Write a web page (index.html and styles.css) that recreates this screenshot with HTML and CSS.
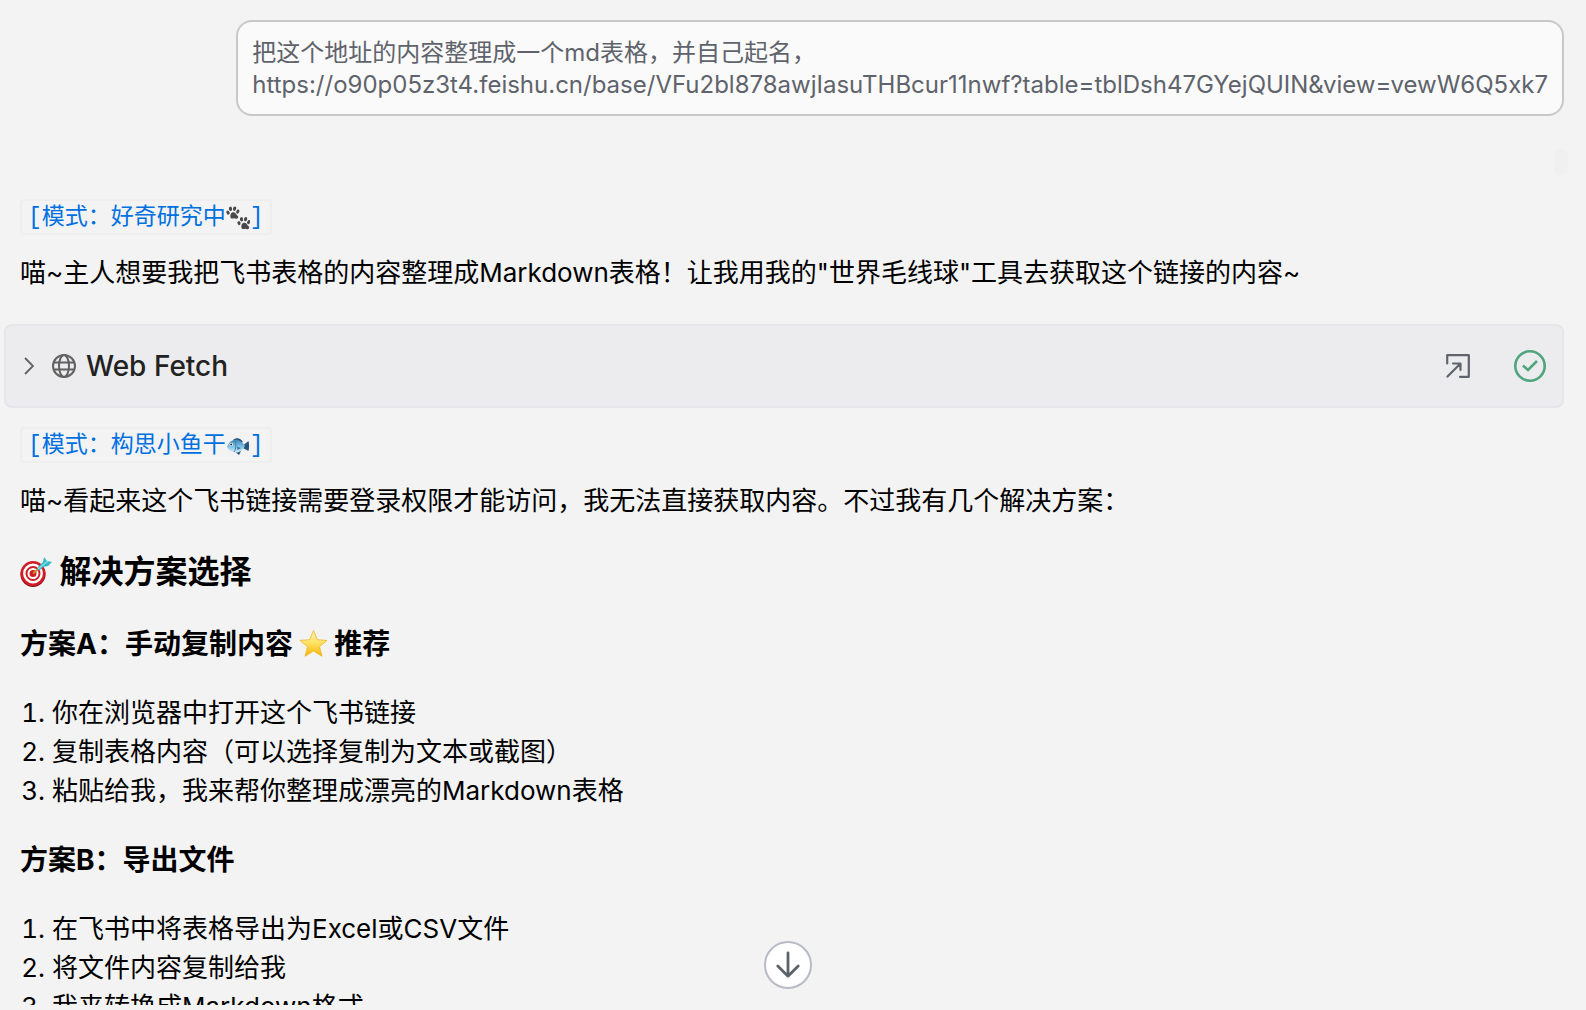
FILE: index.html
```html
<!DOCTYPE html>
<html lang="zh-CN">

<head>
    <meta charset="UTF-8">
    <meta name="viewport" content="width=device-width, initial-scale=1.0">
    <title>飞书表格整理</title>
    <link rel="stylesheet" href="styles.css">
</head>

<body>
    <main class="chat">
        <div class="user-row">
            <div class="user-message">把这个地址的内容整理成一个md表格，并自己起名，<br>https://o90p05z3t4.feishu.cn/base/VFu2bl878awjIasuTHBcur11nwf?table=tblDsh47GYejQUIN&amp;view=vewW6Q5xk7</div>
        </div>

        <div class="message-meta"><span class="badge"></span></div>

        <section class="reply">
            <p class="mode"><code>[模式：好奇研究中<svg class="emoji" viewBox="0 0 24 24" fill="#484848">
                <g id="paw">
                    <path d="M5 7.6c1-1.5 3.2-1.7 4.500-.4.9.8 1 1.800 2.200 2.600 1.300 1 0 3.500-1.700 2.900-.8-.3-1.400-.6-2.400-.3-1 .3-2.700.2-3.100-1-.3-1.300 0-2.800.5-3.800z" />
                    <ellipse cx="2" cy="6.6" rx="1.5" ry="2.1" transform="rotate(-20 2 6.6)" />
                    <ellipse cx="4.5" cy="2.8" rx="1.6" ry="2.2" transform="rotate(-10 4.5 2.8)" />
                    <ellipse cx="8.6" cy="2.7" rx="1.6" ry="2.2" transform="rotate(15 8.6 2.7)" />
                    <ellipse cx="11.8" cy="5.6" rx="1.5" ry="2.1" transform="rotate(30 11.8 5.6)" />
                </g>
                <use href="#paw" x="11" y="10.5" />
            </svg>]</code></p>
            <p>喵~主人想要我把飞书表格的内容整理成Markdown表格！让我用我的"世界毛线球"工具去获取这个链接的内容~</p>
        </section>

        <div class="tool-card">
            <button class="tool-toggle" type="button">
                <svg class="chevron" viewBox="0 0 10 18" fill="none" stroke="#616161" stroke-width="1.8">
                    <path d="M1 1l8 8-8 8" />
                </svg>
                <svg class="globe" viewBox="0 0 24 24" fill="none" stroke="#616161" stroke-width="2">
                    <circle cx="12" cy="12" r="11" />
                    <ellipse cx="12" cy="12" rx="5" ry="11" />
                    <path d="M2 8.5h20M2 15.5h20" />
                </svg>
                <span>Web Fetch</span>
            </button>
            <button class="icon-button" type="button" aria-label="打开">
                <svg class="open-icon" viewBox="0 0 24 24" fill="none" stroke="#5f636b" stroke-width="2.2" stroke-linecap="round" stroke-linejoin="round">
                    <path d="M1.2 9.5V1.2h21.6v21.6H14M1.5 22.5L14 10M7 9.5h7.5V16" />
                </svg>
            </button>
            <svg class="done-icon" viewBox="0 0 32 32" fill="none" stroke="#4fa57c" stroke-width="2.6">
                <circle cx="16" cy="16" r="14.7" />
                <path d="M9 15.5l5 4.5 9-9" />
            </svg>
        </div>

        <section class="reply">
            <p class="mode"><code>[模式：构思小鱼干<svg class="emoji" viewBox="0 0 24 24">
                <defs>
                    <linearGradient id="fish" x1="0" y1="0" x2="0" y2="1">
                        <stop offset="0" stop-color="#3f82b0" />
                        <stop offset=".5" stop-color="#79bfe6" />
                        <stop offset="1" stop-color="#d9edf5" />
                    </linearGradient>
                </defs>
                <path d="M7 6c3-3 8-2 10 2l-4 1zM8 17l5 4 2-4zM17 11.5l5.500-4.500c.8 3 .8 7 0 10L17 14z" fill="#29557a" />
                <path d="M1 12.5C3 8 6 5.500 10.500 5.700c4 .2 6.500 3.300 8.500 6.300-2 3.800-5 6.500-9 6.500-4.300 0-7.500-2.500-9-6z" fill="url(#fish)" />
                <path d="M8.500 7c2 3 1.800 7.500-.5 11" fill="none" stroke="#3b79a5" />
                <path d="M11 12.5l4 1.500-3.500 2z" fill="#397aa7" />
                <circle cx="5.3" cy="10.5" r="1.7" fill="#fff" />
                <circle cx="5.2" cy="10.5" r="1" fill="#172938" />
            </svg>]</code></p>
            <p>喵~看起来这个飞书链接需要登录权限才能访问，我无法直接获取内容。不过我有几个解决方案：</p>

            <h2><svg class="emoji" viewBox="0 0 32 32">
                <circle cx="13" cy="19.5" r="12.5" fill="#8f0b12" />
                <circle cx="13" cy="18.5" r="12.5" fill="#cf1d27" />
                <circle cx="13" cy="18.5" r="8.7" fill="none" stroke="#fff" stroke-width="2.4" />
                <circle cx="13" cy="18.5" r="4.5" fill="none" stroke="#fff" stroke-width="2" />
                <path d="M13 18.5l6-5" stroke="#c98a22" stroke-width="2" />
                <path d="M17 15l1-3 5-5 1-5 3 4 5 1-4 4-5 1-3 3z" fill="#35b8c5" />
                <path d="M18 14L28 6" stroke="#8be3e8" stroke-width="1.3" />
            </svg> 解决方案选择</h2>

            <h3>方案A：手动复制内容 <svg class="emoji" viewBox="0 0 28 28">
                <defs>
                    <linearGradient id="star" x1="0" y1="0" x2="0" y2="1">
                        <stop offset="0" stop-color="#fff3a6" />
                        <stop offset=".45" stop-color="#ffe569" />
                        <stop offset="1" stop-color="#f9b400" />
                    </linearGradient>
                </defs>
                <path d="M13.5 .5l3.800 9.200 9.700.7-7.500 6.300 2.500 9.600-8.500-5.300-8.500 5.300 2.500-9.600L0 10.400l9.700-.7z" fill="url(#star)" stroke="#f0b32b" stroke-width=".8" stroke-linejoin="round" />
            </svg> 推荐</h3>
            <ol>
                <li>你在浏览器中打开这个飞书链接</li>
                <li>复制表格内容（可以选择复制为文本或截图）</li>
                <li>粘贴给我，我来帮你整理成漂亮的Markdown表格</li>
            </ol>

            <h3>方案B：导出文件</h3>
            <ol>
                <li>在飞书中将表格导出为Excel或CSV文件</li>
                <li>将文件内容复制给我</li>
                <li>我来转换成Markdown格式</li>
            </ol>
        </section>
    </main>

    <button class="scroll-down" type="button" aria-label="滚动到底部">
        <svg viewBox="0 0 28 28" fill="none" stroke="#5c6269" stroke-width="3" stroke-linecap="round" stroke-linejoin="round">
            <path d="M14 1v25M3 15l11 11 11-11" />
        </svg>
    </button>
</body>

</html>
```
FILE: styles.css
```css
* {
    box-sizing: border-box;
}

body {
    margin: 0;
    height: 100vh;
    padding-bottom: 5px;
    overflow: hidden;
    background-color: #f3f3f3;
    color: #000;
    font-family: Inter, "Noto Sans CJK SC", sans-serif;
    font-size: 26px;
    line-height: 39px;
}

.chat {
    height: 100%;
    padding: 20px 22px 0 4px;
    overflow: hidden;
}

.user-row {
    display: flex;
    justify-content: flex-end;
}

.user-message {
    padding: 15px 14px 13px;
    border: 2px solid #c8c8c8;
    border-radius: 16px;
    background-color: #fafafa;
    color: #5f636b;
    font-size: 24px;
    line-height: 32px;
}

.message-meta {
    display: flex;
    justify-content: flex-end;
    margin-right: -4px;
    padding: 33px 0 24px;
}

.badge {
    width: 14px;
    height: 26px;
    border-radius: 6px;
    background-color: #f0f0f0;
}

.reply {
    padding: 0 16px;
}

p,
h2,
h3,
ol {
    margin: 0;
}

.mode {
    display: flex;
    margin-bottom: 18px;
}

.mode code {
    display: flex;
    align-items: center;
    height: 36px;
    padding: 2px 6px 0;
    border: 2px solid #eee;
    border-radius: 4px;
    color: #0070e0;
    font-family: "Liberation Mono", "Noto Sans CJK SC", monospace;
    font-size: 23px;
}

.emoji {
    width: 1em;
    height: 1em;
}

.mode .emoji {
    width: 24px;
    height: 24px;
}

.tool-card {
    display: flex;
    align-items: center;
    height: 84px;
    margin: 32px 0 19px;
    padding: 0 16px 0 18px;
    border: 2px solid #e6e6ea;
    border-radius: 8px;
    background-color: #ececee;
}

button {
    padding: 0;
    border: none;
    background: none;
    font-family: inherit;
    cursor: pointer;
}

.tool-toggle {
    display: flex;
    flex: 1;
    align-items: center;
    color: #222;
    font-size: 28px;
    font-weight: 500;
}

.chevron {
    width: 10px;
    height: 18px;
    margin-right: 18px;
}

.globe {
    width: 24px;
    height: 24px;
    margin-right: 10px;
}

.icon-button {
    display: flex;
    margin-right: 44px;
}

.open-icon {
    width: 24px;
    height: 24px;
}

.done-icon {
    width: 32px;
    height: 32px;
}

h2 {
    margin-top: 28px;
    font-size: 32px;
    line-height: 48px;
}

h3 {
    margin: 28px 0 29px;
    font-size: 28px;
    line-height: 40px;
}

h2 .emoji,
h3 .emoji {
    vertical-align: -4px;
}

ol {
    margin-bottom: 30px;
    padding-left: 32px;
}

.scroll-down {
    position: absolute;
    bottom: 21px;
    left: calc(50% - 29px);
    display: flex;
    align-items: center;
    justify-content: center;
    width: 48px;
    height: 48px;
    border: 2px solid #b8bac6;
    border-radius: 50%;
    background-color: #fff;
}

.scroll-down svg {
    width: 26px;
    height: 28px;
}
```
